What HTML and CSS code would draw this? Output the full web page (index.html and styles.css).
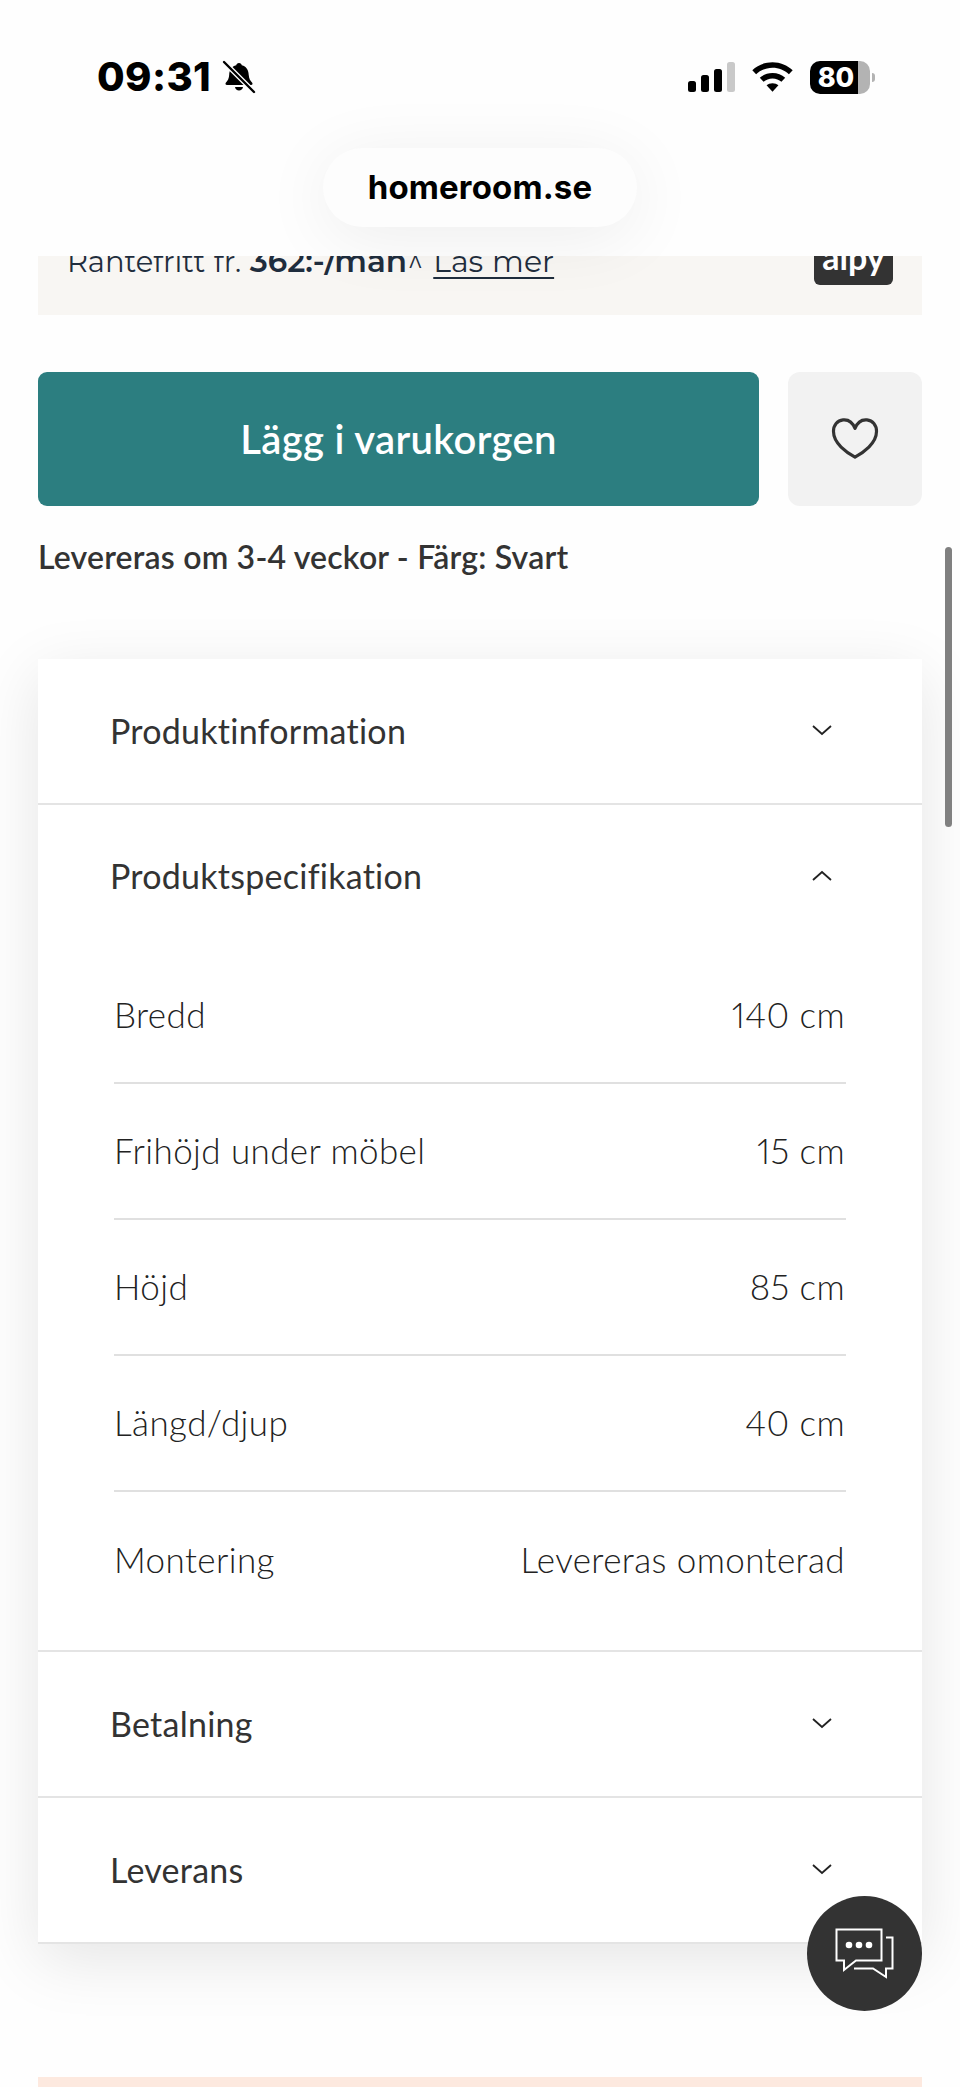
FILE: index.html
```html
<!DOCTYPE html>
<html lang="sv">
<head>
<meta charset="utf-8">
<title>homeroom.se</title>
<link rel="stylesheet" href="styles.css">
</head>
<body>
<div class="page">
  <header class="top">
    <div class="status">
      <div class="status-left">
        <span class="time">09:31</span>
        <svg class="bell" viewBox="0 0 34 34"><path fill="#000" d="M17 3c1.600 0 2.600 1 2.800 2.300 4.600 1.200 6.700 4.800 6.900 9.500.2 3.800 1.600 6 3.300 7.600 1 1 .5 2.600-1 2.600H5c-1.500 0-2-1.600-1-2.600 1.700-1.600 3-3.800 3.200-7.600.2-4.700 2.400-8.300 7-9.500C14.400 4 15.400 3 17 3zM13 27h8c-.3 2.200-1.900 3.600-4 3.600s-3.700-1.400-4-3.600z"/><path stroke="#fff" stroke-width="5" d="M2 2l30 30"/><path stroke="#000" stroke-width="2.400" stroke-linecap="round" d="M2 2l30 30"/></svg>
      </div>
      <div class="status-right">
        <svg class="signal" viewBox="0 0 47 30"><rect x="0" y="19" width="8" height="11" rx="2.500" fill="#000"/><rect x="13" y="13" width="8" height="17" rx="2.500" fill="#000"/><rect x="26" y="7" width="8" height="23" rx="2.500" fill="#000"/><rect x="39" y="0" width="8" height="30" rx="2.500" fill="#c9c9c9"/></svg>
        <svg class="wifi" viewBox="0 0 40 29"><path fill="#000" d="M20 0c7.600 0 14.500 3 19.700 7.800L36 11.700C31.800 7.800 26.200 5.400 20 5.400S8.200 7.800 4 11.700L.3 7.800C5.500 3 12.400 0 20 0z"/><path fill="#000" d="M20 10.500c4.800 0 9.100 1.800 12.400 4.800l-3.700 3.900c-2.300-2.100-5.300-3.300-8.700-3.300s-6.400 1.200-8.700 3.300l-3.700-3.900c3.300-3 7.600-4.800 12.400-4.800z"/><path fill="#000" d="M20 20.500c2.300 0 4.300.8 5.800 2.100L20 29l-5.800-6.400c1.500-1.300 3.500-2.100 5.800-2.100z"/></svg>
        <div class="battery"><span class="battery-level">80</span><span class="battery-rest"></span><span class="battery-cap"></span></div>
      </div>
    </div>
    <div class="address">homeroom.se</div>
  </header>

  <section class="finance">
    <p class="finance-line">Räntefritt fr. <b>362:-/man</b>^ <a>Läs mer</a></p>
    <div class="alpy"><span>alpy</span></div>
  </section>

  <section class="buy">
    <button class="add">Lägg i varukorgen</button>
    <button class="fav" aria-label="Favorit">
      <svg viewBox="0 0 50 46"><path fill="none" stroke="#333" stroke-width="3.300" stroke-linejoin="round" d="M25 12C22.500 5.500 17.500 2.500 12.500 3 6.500 3.600 2.500 8.500 2.500 15c0 6 3 11.500 8 16.500 4 4 9 7.500 14.500 10.500 5.500-3 10.500-6.500 14.500-10.500 5-5 8-10.500 8-16.500 0-6.500-4-11.400-10-12C32.500 2.500 27.500 5.500 25 12z"/></svg>
    </button>
  </section>
  <p class="delivery">Levereras om 3-4 veckor - Färg: Svart</p>

  <section class="accordion">
    <div class="acc-row"><span>Produktinformation</span><svg class="chev" viewBox="0 0 20 11"><path d="M1 1l9 8 9-8"/></svg></div>
    <div class="acc-open">
      <div class="acc-head"><span>Produktspecifikation</span><svg class="chev" viewBox="0 0 20 11"><path d="M1 10l9-8 9 8"/></svg></div>
      <dl class="specs">
        <div class="spec"><dt>Bredd</dt><dd>140 cm</dd></div>
        <div class="spec"><dt>Frihöjd under möbel</dt><dd>15 cm</dd></div>
        <div class="spec"><dt>Höjd</dt><dd>85 cm</dd></div>
        <div class="spec"><dt>Längd/djup</dt><dd>40 cm</dd></div>
        <div class="spec"><dt>Montering</dt><dd>Levereras omonterad</dd></div>
      </dl>
    </div>
    <div class="acc-row"><span>Betalning</span><svg class="chev" viewBox="0 0 20 11"><path d="M1 1l9 8 9-8"/></svg></div>
    <div class="acc-row"><span>Leverans</span><svg class="chev" viewBox="0 0 20 11"><path d="M1 1l9 8 9-8"/></svg></div>
  </section>

  <div class="peach"></div>

  <div class="scrollbar"></div>
  <button class="chat" aria-label="Chatt">
    <svg viewBox="0 0 60 52"><path fill="none" stroke="#fff" stroke-width="2" d="M1.500 1.500h45v31H21L9 42v-9.500H1.500z"/><path fill="none" stroke="#fff" stroke-width="2" d="M51 9.500h6.500v31H51V49l-13-8.500H19"/><circle cx="14" cy="17" r="3.300" fill="#fff"/><circle cx="24" cy="17" r="3.300" fill="#fff"/><circle cx="34" cy="17" r="3.300" fill="#fff"/></svg>
  </button>
</div>
</body>
</html>
```
FILE: styles.css
```css
* { box-sizing: border-box; }
html, body { margin: 0; padding: 0; background: #fefefe; }
.page { position: relative; width: 960px; height: 2087px; overflow: hidden; font-family: "Lato", "Noto Sans", sans-serif; color: #333; background: #fefefe; }

.top { position: relative; z-index: 2; height: 256px; background: #fefefe; }
.status { display: flex; justify-content: space-between; align-items: center; padding: 56px 90px 0 97px; height: 98px; }
.status-left { display: flex; align-items: center; gap: 11px; }
.time { font-family: "Inter", sans-serif; font-weight: 800; font-size: 40px; line-height: 1; color: #000; letter-spacing: .4px; }
.bell { width: 34px; height: 34px; }
.status-right { display: flex; align-items: center; }
.signal { width: 47px; height: 30px; }
.wifi { width: 41px; height: 30px; margin-left: 17px; }
.battery { position: relative; display: flex; width: 60px; height: 33px; margin-left: 17px; border-radius: 10px; }
.battery-level { width: 48px; height: 33px; background: #000; color: #fff; font-family: "Inter", sans-serif; font-weight: 800; font-size: 27px; line-height: 33px; text-align: center; border-radius: 10px 0 0 10px; padding-left: 4px; }
.battery-rest { width: 12px; height: 33px; background: #b3b3b3; border-radius: 0 10px 10px 0; }
.battery-cap { position: absolute; right: -5px; top: 12px; width: 3px; height: 9px; background: #b3b3b3; border-radius: 0 3px 3px 0; }
.address { position: absolute; left: 323px; top: 148px; width: 314px; height: 79px; border-radius: 40px; background: #fdfdfd; box-shadow: 0 10px 70px rgba(0,0,0,.07); font-family: "Inter", sans-serif; font-weight: 700; font-size: 33px; letter-spacing: .15px; line-height: 79px; text-align: center; color: #000; }

.finance { display: flex; justify-content: space-between; margin: 0 38px; height: 59px; background: #f8f6f3; overflow: hidden; padding: 0 29px 0 29px; }
.finance-line { margin: -17px 0 0; font-family: "Montserrat", "Lato", sans-serif; font-size: 29px; word-spacing: 1px; line-height: 44px; color: #1f2d3d; font-weight: 400; }
.finance-line b { font-size: 31px; font-weight: 600; }
.finance-line a { font-size: 30px; margin-left: 1px; text-decoration: underline; text-underline-offset: 5px; text-decoration-thickness: 2px; }
.alpy { width: 79px; height: 29px; background: #333; border-radius: 0 0 6px 6px; overflow: hidden; text-align: center; }
.alpy span { display: block; margin-top: -19px; color: #fff; font-size: 34px; font-weight: 700; line-height: 40px; }

.buy { display: flex; gap: 29px; margin: 57px 38px 0; }
.add { flex: 1; height: 134px; border: 0; border-radius: 9px; background: #2c7e80; color: #fff; font-family: inherit; font-size: 40px; letter-spacing: .35px; font-weight: 600; }
.fav { width: 134px; height: 134px; border: 0; border-radius: 12px; background: #f2f2f2; display: flex; align-items: center; justify-content: center; padding: 0; }
.fav svg { width: 48px; height: 44px; }
.delivery { margin: 30px 38px 0; font-size: 32px; letter-spacing: .2px; line-height: 42px; font-weight: 600; color: #333; }

.accordion { margin: 81px 38px 0; background: #fff; box-shadow: 0 16px 60px rgba(0,0,0,.1); border-bottom: 2px solid #e4e4e4; }
.acc-row { display: flex; justify-content: space-between; align-items: center; height: 146px; padding: 0 90px 2px 72px; font-size: 34px; letter-spacing: .25px; border-bottom: 2px solid #e4e4e4; }
.acc-row:last-child { border-bottom: 0; height: 144px; }
.acc-head { display: flex; justify-content: space-between; align-items: center; height: 143px; padding: 0 90px 2px 72px; font-size: 34px; letter-spacing: .25px; }
.chev { width: 20px; height: 11px; fill: none; stroke: #222; stroke-width: 1.800; }
.acc-open { border-bottom: 2px solid #e4e4e4; }
.specs { margin: 0; padding: 0 76px 22px 76px; }
.spec { display: flex; justify-content: space-between; align-items: center; height: 136px; padding-bottom: 3px; font-size: 35px; letter-spacing: .4px; font-weight: 300; font-variant-numeric: proportional-nums; color: #222; border-bottom: 2px solid #e0e0e0; }
.spec:last-child { border-bottom: 0; }
.spec dt { margin: 0; }
.spec dd { margin: 0 1px 0 0; }

.peach { margin: 133px 38px 0; height: 20px; background: #fde9df; }

.scrollbar { position: absolute; left: 945px; top: 547px; width: 7px; height: 280px; border-radius: 4px; background: #808080; }
.chat { position: absolute; left: 807px; top: 1896px; width: 115px; height: 115px; border: 0; border-radius: 50%; background: #333; display: flex; align-items: center; justify-content: center; padding: 0; }
.chat svg { width: 60px; height: 52px; }
```
